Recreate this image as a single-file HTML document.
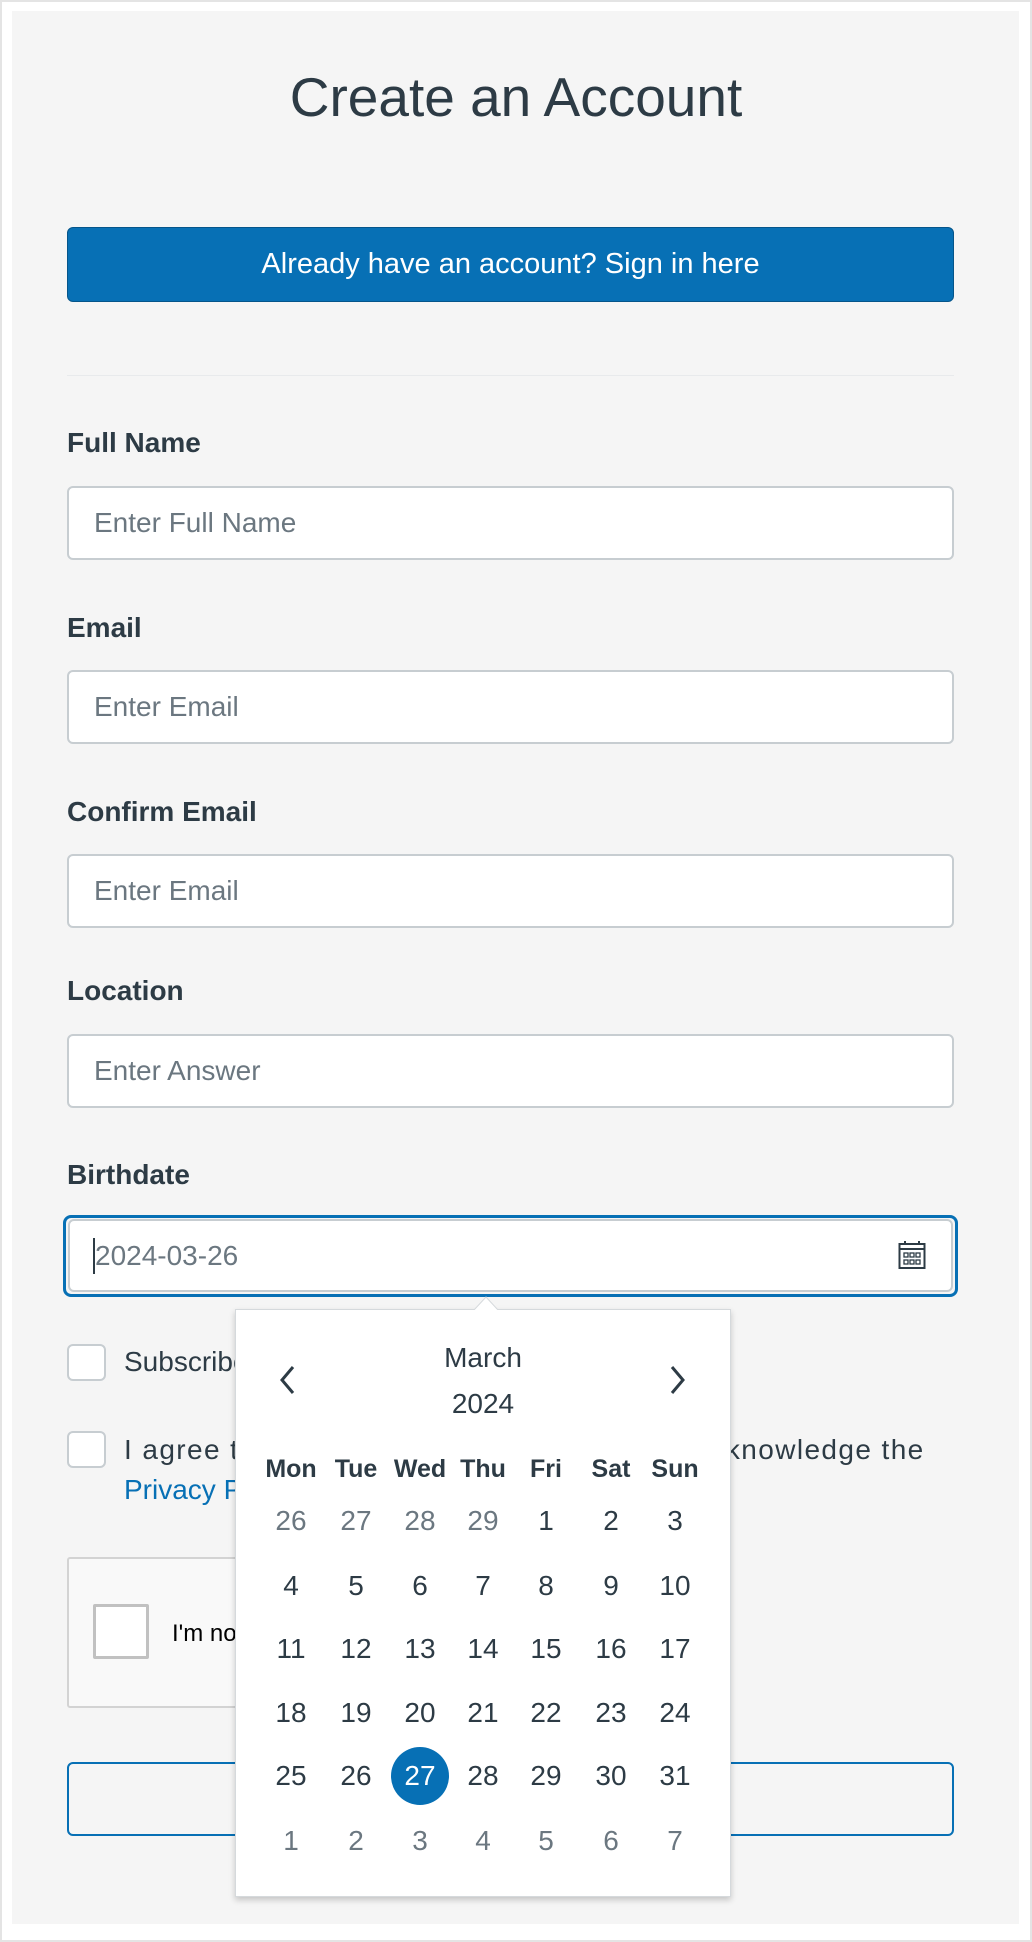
<!DOCTYPE html>
<html><head><meta charset="utf-8"><style>
*{box-sizing:border-box;margin:0;padding:0}
body{width:1032px;height:1942px;background:#fff;font-family:"Liberation Sans",sans-serif;color:#2d3b45;position:relative;overflow:hidden}
.panel{position:absolute;left:12px;top:11px;width:1007px;height:1913px;background:#f5f5f5}
.a{position:absolute}
.lbl{position:absolute;left:67px;font-weight:bold;font-size:28px;line-height:32px;transform:translateY(-16px)}
.inp{position:absolute;left:67px;width:887px;height:74px;background:#fff;border:2px solid #c7cdd1;border-radius:6px;font-size:28px;color:#6b7780;padding-left:25px;line-height:70px}
.cb{position:absolute;left:67px;width:39px;height:37px;background:#fff;border:2px solid #c7cdd1;border-radius:6px}
.txt{position:absolute;font-size:28px;line-height:34px;transform:translateY(-17px)}
.cal{position:absolute;left:235px;top:1309px;width:496px;height:588px;background:#fff;border:1px solid #d5d9dc;box-shadow:0 3px 6px rgba(0,0,0,.2)}
.d{position:absolute;width:60px;text-align:center;font-size:28px;line-height:34px;transform:translate(-30px,-17px)}
.g{color:#6b7780}
.h{font-weight:bold;font-size:25px}
</style></head><body>
<div class="a" style="left:0;top:0;width:1032px;height:1942px;border:2px solid #e4e4e4"></div>
<div class="panel"></div>
<div class="a" style="left:0;width:1032px;top:66px;text-align:center;font-size:55px;line-height:62px">Create an Account</div>
<div class="a" style="left:67px;top:227px;width:887px;height:75px;background:#0770b5;border:1px solid #05558a;border-radius:6px;color:#fff;font-size:29px;text-align:center;line-height:73px">Already have an account? Sign in here</div>
<div class="a" style="left:67px;top:375px;width:887px;height:1px;background:#e8eaec"></div>
<div class="lbl" style="top:443px">Full Name</div>
<div class="inp" style="top:486px">Enter Full Name</div>
<div class="lbl" style="top:628px">Email</div>
<div class="inp" style="top:670px">Enter Email</div>
<div class="lbl" style="top:812px">Confirm Email</div>
<div class="inp" style="top:854px">Enter Email</div>
<div class="lbl" style="top:991px">Location</div>
<div class="inp" style="top:1034px">Enter Answer</div>
<div class="lbl" style="top:1175px">Birthdate</div>
<div class="a" style="left:63px;top:1215px;width:895px;height:82px;border:3px solid #0770b5;border-radius:8px"></div>
<div class="inp" style="top:1219px;left:68px;width:885px;height:73px;line-height:69px;border-width:2px">2024-03-26</div>
<div class="a" style="left:93px;top:1238px;width:2px;height:36px;background:#2d3b45"></div>
<svg class="a" style="left:898px;top:1240px" width="28" height="30" viewBox="0 0 28 30"><rect x="1.5" y="4" width="25" height="24" fill="none" stroke="#2d3b45" stroke-width="2"/><line x1="1.5" y1="9" x2="26.5" y2="9" stroke="#2d3b45" stroke-width="2"/><line x1="7" y1="1" x2="7" y2="5" stroke="#2d3b45" stroke-width="2"/><line x1="21" y1="1" x2="21" y2="5" stroke="#2d3b45" stroke-width="2"/><g fill="none" stroke="#2d3b45" stroke-width="1.3"><rect x="6" y="13" width="4" height="4"/><rect x="12" y="13" width="4" height="4"/><rect x="18" y="13" width="4" height="4"/><rect x="6" y="20" width="4" height="4"/><rect x="12" y="20" width="4" height="4"/><rect x="18" y="20" width="4" height="4"/></g></svg>
<div class="cb" style="top:1344px"></div>
<div class="txt" style="left:124px;top:1362px">Subscribe</div>
<div class="cb" style="top:1431px"></div>
<div class="txt" style="left:124px;top:1450px;width:840px;white-space:nowrap;letter-spacing:1.4px">I agree to the Acceptable Use Policy and acknowledge the</div>
<div class="txt" style="left:124px;top:1490px;color:#0770b5">Privacy Policy</div>
<div class="a" style="left:67px;top:1557px;width:380px;height:151px;background:#f9f9f9;border:2px solid #d3d3d3;border-radius:3px"></div>
<div class="a" style="left:93px;top:1604px;width:56px;height:55px;background:#fff;border:3px solid #c1c1c1;border-radius:2px"></div>
<div class="a" style="left:172px;top:1620px;font-size:24px;color:#000">I'm not a robot</div>
<div class="a" style="left:67px;top:1762px;width:887px;height:74px;border:2px solid #0770b5;border-radius:6px"></div>
<div class="cal">
<svg class="a" style="left:238px;top:-14px" width="24" height="14" viewBox="0 0 24 14"><path d="M0 14 L12 1 L24 14" fill="#fff" stroke="#d5d9dc"/></svg>
</div>
<div class="d" style="left:483px;top:1358px;width:200px;transform:translate(-100px,-17px)">March</div>
<div class="d" style="left:483px;top:1404px;width:200px;transform:translate(-100px,-17px)">2024</div>
<svg class="a" style="left:277px;top:1364px" width="20" height="32" viewBox="0 0 20 32"><path d="M16 3 L5 16 L16 29" fill="none" stroke="#2d3b45" stroke-width="3"/></svg>
<svg class="a" style="left:668px;top:1364px" width="20" height="32" viewBox="0 0 20 32"><path d="M4 3 L15 16 L4 29" fill="none" stroke="#2d3b45" stroke-width="3"/></svg>
<div class="a" style="left:391px;top:1747px;width:58px;height:58px;border-radius:50%;background:#0770b5"></div>
<div id="days"></div>
<script>
var xs=[291,356,420,483,546,611,675],ys=[1521,1586,1649,1713,1776,1841];
var h=["Mon","Tue","Wed","Thu","Fri","Sat","Sun"],o="";
h.forEach(function(t,i){o+='<div class="d h" style="left:'+xs[i]+'px;top:1469px">'+t+'</div>'});
var days=[26,27,28,29];for(var i=1;i<=31;i++)days.push(i);for(i=1;i<=7;i++)days.push(i);
days.forEach(function(n,k){var r=Math.floor(k/7),c=k%7;var g=(k<4||k>=35);var st=(k==30)?'color:#fff;':'';
o+='<div class="d'+(g?' g':'')+'" style="'+st+'left:'+xs[c]+'px;top:'+ys[r]+'px">'+n+'</div>'});
document.getElementById('days').innerHTML=o;
</script>
</body></html>
